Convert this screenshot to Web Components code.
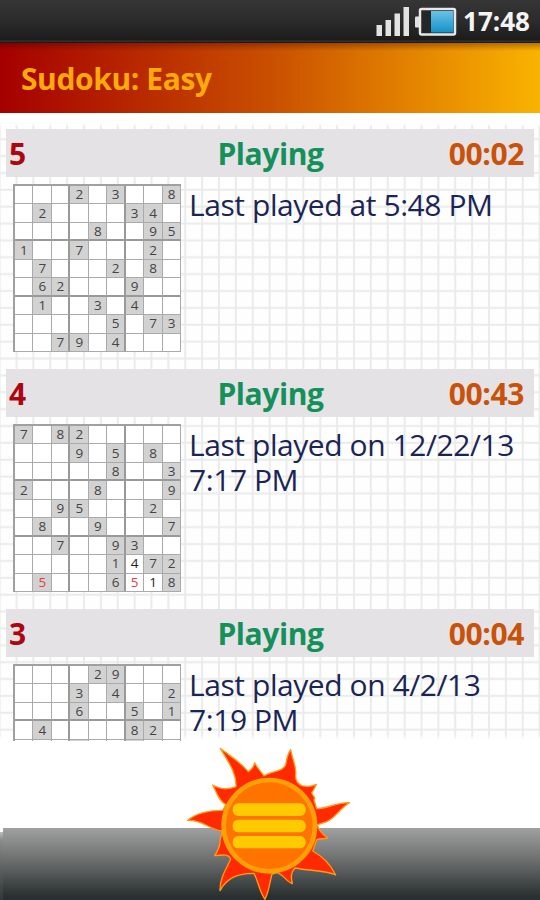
<!DOCTYPE html>
<html lang="en">
<head>
<meta charset="utf-8">
<title>Sudoku: Easy</title>
<style>
    body {
        margin: 0;
        width: 540px;
        height: 900px;
        overflow: hidden;
        background: #fff;
        font-family: 'Open Sans', 'Noto Sans', sans-serif;
    }
</style>
</head>
<body>
<sudoku-app>
    <status-bar slot="status">17:48</status-bar>
    <title-bar slot="title">Sudoku: Easy</title-bar>
    <game-entry number="5" state="Playing" time="00:02"
        board="...2.3..8.2....34.....8..951..7...2..7...2.8..62...9...1..3.4.......5.73..79.4...">Last played at 5:48 PM</game-entry>
    <game-entry number="4" state="Playing" time="00:43"
        board="7.82........9.5.8......8..32...8...9..95...2..8..9...7..7..93.......1d72.E...6ea8">Last played on 12/22/13 7:17 PM</game-entry>
    <game-entry number="3" state="Playing" time="00:04"
        board="....29......3.4..2...6..5.1.4....82....5..6..................................." >Last played on 4/2/13 7:19 PM</game-entry>
    <sun-menu slot="menu"></sun-menu>
</sudoku-app>

<script>
// Small helper: one template per element, parsed only once
function makeTemplate(html) {
    const t = document.createElement('template');
    t.innerHTML = html;
    return t;
}

class BaseElement extends HTMLElement {
    constructor() {
        super();
        this.attachShadow({ mode: 'open' });
        this.shadowRoot.appendChild(this.constructor.template.content.cloneNode(true));
    }
}

class SudokuApp extends BaseElement {
    static template = makeTemplate(/*html*/`
    <style>
        :host { display: flex; flex-direction: column; height: 900px; }
        main {
            flex: 1;
            min-height: 0;
            overflow: hidden;
            box-sizing: border-box;
            padding: 16px 6px 0;
            display: flex;
            flex-direction: column;
            /* squared paper */
            background:
                linear-gradient(#fff 10px, rgba(255,255,255,0) 14px),
                linear-gradient(rgba(255,255,255,0) 622px, #fff 627px),
                repeating-linear-gradient(90deg, #e9ece9 0 1px, transparent 2px 15.87px, #e9ece9 16.87px) 15.8px 0 / 539.84px 100% repeat-x,
                repeating-linear-gradient(#e9ece9 0 1px, transparent 2px 15.87px, #e9ece9 16.87px) 0 8.8px / 100% 657.93px,
                #fefefe;
        }
    </style>
    <slot name="status"></slot>
    <slot name="title"></slot>
    <main><slot></slot></main>
    <slot name="menu"></slot>`);
}

class StatusBar extends BaseElement {
    static template = makeTemplate(/*html*/`
    <style>
        :host {
            display: flex;
            align-items: center;
            justify-content: flex-end;
            box-sizing: border-box;
            height: 43px;
            padding-right: 10px;
            background: linear-gradient(#363636, #2b2b2b 50%, #1c1c1c 92%, #333 96%, #111);
            color: #f4f4f4;
            font-size: 26px;
            font-weight: 700;
            line-height: 35px;
        }
        svg { margin-right: 6px; }
    </style>
    <svg width="82" height="43" viewBox="0 0 82 43">
        <defs>
            <linearGradient id="charge" x2="0" y2="1">
                <stop offset="0" stop-color="#68c3e4"/>
                <stop offset="1" stop-color="#1592c8"/>
            </linearGradient>
        </defs>
        <g fill="#e2e2e2">
            <rect x="1.5" y="25" width="5.5" height="11"/>
            <rect x="10.5" y="20" width="5.5" height="16"/>
            <rect x="19.5" y="13.5" width="5.5" height="22.5"/>
            <rect x="28.5" y="7" width="5.5" height="29"/>
            <rect x="40" y="16.5" width="6" height="11" rx="1"/>
        </g>
        <rect x="45" y="9" width="35" height="25.5" rx="1.5" fill="#262626" stroke="#e8e8e8" stroke-width="2.5"/>
        <rect x="56" y="11" width="22.5" height="21.5" fill="url(#charge)"/>
    </svg>
    <span class="clock"><slot></slot></span>`);
}

class TitleBar extends BaseElement {
    static template = makeTemplate(/*html*/`
    <style>
        :host {
            display: block;
            box-sizing: border-box;
            height: 70px;
            padding-left: 21px;
            background:
                linear-gradient(rgba(60,0,0,.35), transparent 8px),
                linear-gradient(90deg, #a50000, #c94f00 50%, #fab300);
            color: #ffaa0b;
            font-size: 30px;
            font-weight: 700;
            letter-spacing: -0.4px;
            line-height: 71px;
            white-space: nowrap;
        }
    </style>
    <slot></slot>`);
}

// 81 characters: "." is empty, a digit is a given, a-i are the player's digits,
// E is a conflicting given and e a conflicting entry
class SudokuBoard extends BaseElement {
    static template = makeTemplate(/*html*/`
    <style>
        :host {
            display: grid;
            grid-template-columns: repeat(9, 1fr);
            grid-template-rows: repeat(9, 1fr);
            box-sizing: border-box;
            width: 168px;
            height: 168px;
            border: solid #a0a0a0;
            border-width: 2px 0 0 2px;
            background: #fff;
            color: #444;
            font-size: 13.5px;
        }
        span {
            display: flex;
            align-items: center;
            justify-content: center;
            min-width: 0;
            min-height: 0;
            box-sizing: border-box;
            border: solid #aaa;
            border-width: 0 1px 1px 0;
            letter-spacing: -0.5px;
            line-height: 17px;
        }
        .given { background: #d2d2d2; }
        .right { border-right: 2px solid #999; }
        .bottom { border-bottom: 2px solid #999; }
        .own { color: #222; }
        .wrong { color: #ef3b3b; }
    </style>`);
    static get observedAttributes() {
        return ['cells'];
    }
    attributeChangedCallback(name, oldValue, newValue) {
        if (oldValue === newValue) return;
        newValue.padEnd(81, '.').split('').forEach((c, i) => {
            const cell = document.createElement('span');
            const col = i % 9;
            const row = Math.floor(i / 9);
            if (/[1-9E]/.test(c)) cell.classList.add('given');
            if (/[a-i]/.test(c)) cell.classList.add('own');
            if (/e/i.test(c)) cell.classList.add('wrong');
            if (col === 2 || col === 5) cell.classList.add('right');
            if (row === 2 || row === 5) cell.classList.add('bottom');
            if (c !== '.') cell.textContent = /\d/.test(c) ? c : c.toLowerCase().charCodeAt(0) - 96;
            this.shadowRoot.appendChild(cell);
        });
    }
}

class GameEntry extends BaseElement {
    static template = makeTemplate(/*html*/`
    <style>
        :host { display: block; flex: none; height: 240px; }
        header {
            display: grid;
            grid-template-columns: 1fr auto 1fr;
            height: 48px;
            box-sizing: border-box;
            padding: 0 10px 0 3px;
            background: #e4e2e5;
            font-size: 30px;
            font-weight: 700;
            letter-spacing: -0.4px;
            line-height: 50px;
        }
        .number { color: #ad0610; }
        .state { color: #14905a; padding-left: 8px; }
        .time { color: #ca5208; text-align: right; }
        .body { display: flex; gap: 8px; padding: 7px 0 0 7px; }
        sudoku-board { flex: none; }
        p {
            margin: 3px 0 0;
            width: 345px;
            color: #1b2555;
            font-size: 30px;
            letter-spacing: -0.43px;
            line-height: 35px;
        }
    </style>
    <header>
        <span class="number"></span>
        <span class="state"></span>
        <span class="time"></span>
    </header>
    <div class="body">
        <sudoku-board></sudoku-board>
        <p><slot></slot></p>
    </div>`);
    connectedCallback() {
        for (const key of ['number', 'state', 'time']) {
            this.shadowRoot.querySelector('.' + key).textContent = this.getAttribute(key);
        }
        this.shadowRoot.querySelector('sudoku-board').setAttribute('cells', this.getAttribute('board'));
    }
}

class SunMenu extends BaseElement {
    static template = makeTemplate(/*html*/`
    <style>
        :host {
            display: flex;
            justify-content: center;
            flex: none;
            height: 159px;
            background:
                linear-gradient(#a0a0a0, #6c6e6e 45%, #29302f 95%, #263031) 3px 87px / 537px 72px no-repeat,
                linear-gradient(#bbb, #8a8c8c 12%, #5c5f5f 55%, #303838) 0 91px / 3px 68px no-repeat,
                #fff;
        }
        svg { margin-top: -1px; }
    </style>
    <svg width="180" height="160" viewBox="0 0 540 480">
        <path fill="#ff2a00" stroke="#ff9a12" stroke-width="4" stroke-linejoin="round" d="
            M168 140 C170 95 140 60 121 25 C150 48 180 65 205 95 C215 88 222 80 224 68
            C232 85 244 95 252 108 C275 92 305 98 317 75 C320 58 322 42 332 29
            C336 55 350 80 347 103 C345 120 355 132 365 137 C382 142 396 139 409 133
            C403 145 400 153 395 158 C397 165 402 169 404 174 L402 180
            L410 206 C445 205 470 187 509 188 C480 205 465 235 440 245 L413 254
            C413 270 427 282 443 294 C428 298 415 294 410 300 L398 333
            C430 350 450 370 467 405 C435 390 390 393 345 384
            C330 400 334 415 337 431 C320 425 308 402 290 398
            L276 402 C268 430 268 450 255 478 C238 455 235 425 222 400
            C170 400 140 415 120 452 C119 415 137 390 152 358
            C148 340 122 345 104 347 C115 330 122 315 120 300 L128 273
            C90 270 65 238 23 241 C50 218 90 211 128 211
            L138 194 C116 183 110 157 98 135 C120 148 145 149 168 140Z"/>
        <circle cx="268" cy="257" r="137" fill="#ff7400" stroke="#ffa006" stroke-width="14"/>
        <g fill="#ffcb00">
            <rect x="158" y="190" width="219" height="38" rx="17"/>
            <rect x="158" y="239" width="219" height="38" rx="17"/>
            <rect x="158" y="288" width="219" height="37" rx="17"/>
        </g>
    </svg>`);
}

customElements.define('sudoku-app', SudokuApp);
customElements.define('status-bar', StatusBar);
customElements.define('title-bar', TitleBar);
customElements.define('sudoku-board', SudokuBoard);
customElements.define('game-entry', GameEntry);
customElements.define('sun-menu', SunMenu);
</script>
</body>
</html>
